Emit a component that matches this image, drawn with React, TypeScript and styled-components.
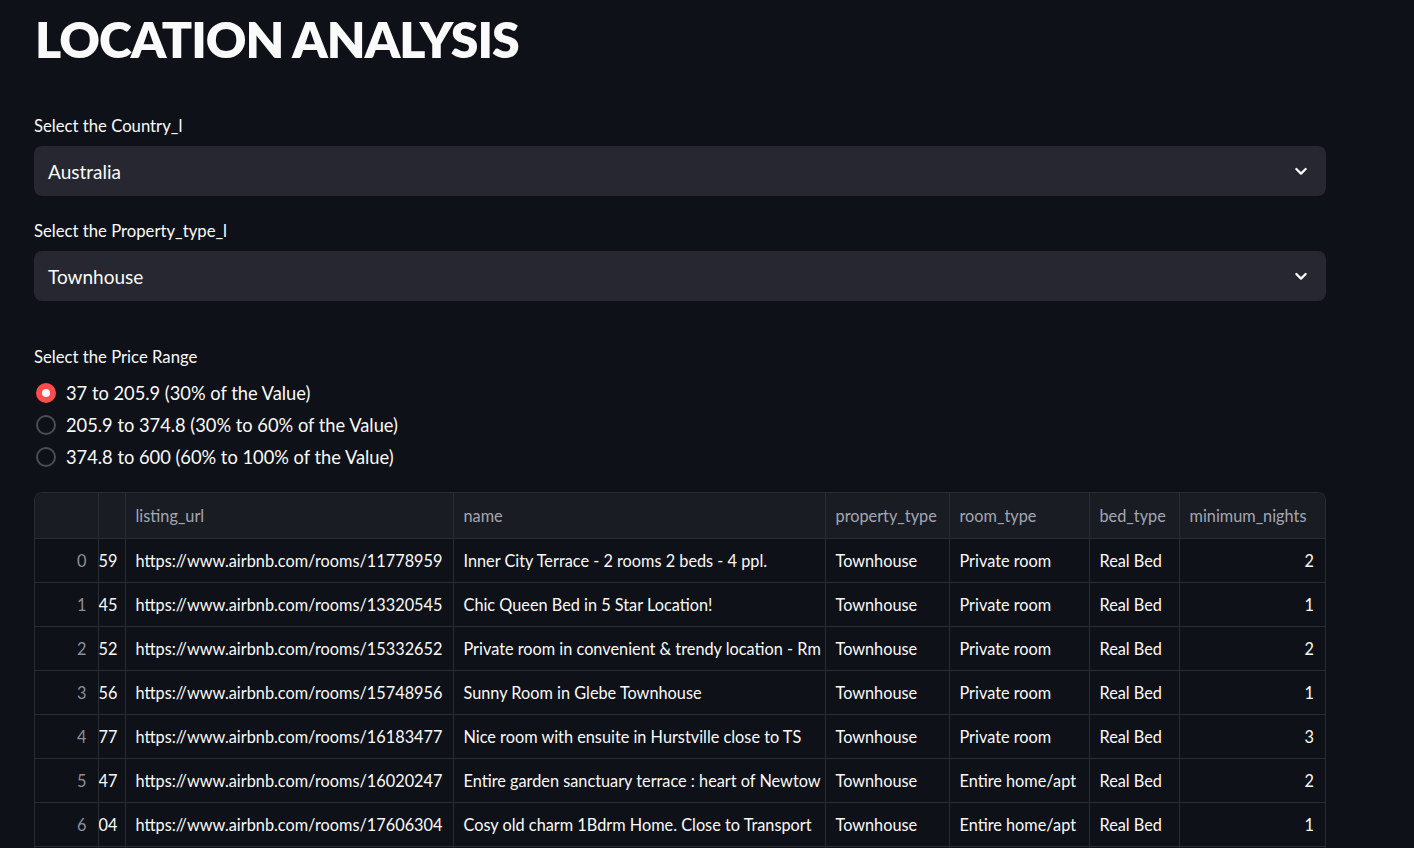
import React from "react";
import styled, { createGlobalStyle } from "styled-components";

const Global = createGlobalStyle`
  html, body { margin: 0; padding: 0; background: #0e1117; }
  body { font-family: "Lato", "Noto Sans", sans-serif; color: #fafafa; }
  * { box-sizing: border-box; }
`;

const Page = styled.div`
  width: 1414px;
  height: 848px;
  overflow: hidden;
  padding: 8px 0 0 34px;
  background: #0e1117;
`;

const Main = styled.div`
  width: 1292px;
  display: flex;
  flex-direction: column;
`;

const Title = styled.h1`
  margin: 0 0 0 1px;
  font-size: 50px;
  line-height: 62px;
  font-weight: 800;
  letter-spacing: -1px;
  color: #fafafa;
`;

const Field = styled.div<{ $top: number }>`
  margin-top: ${(p) => p.$top}px;
  display: flex;
  flex-direction: column;
  gap: 9px;
`;

const Label = styled.div`
  font-size: 16.7px;
  line-height: 22px;
  color: #fafafa;
`;

const Select = styled.div`
  height: 50px;
  border-radius: 8px;
  background: #262730;
  display: flex;
  align-items: center;
  justify-content: space-between;
  padding: 0 17px 0 14px;
  font-size: 19px;
  color: #fafafa;
`;

const RadioGroup = styled.div`
  display: flex;
  flex-direction: column;
`;

const RadioRow = styled.div`
  height: 32px;
  display: flex;
  align-items: center;
  gap: 10px;
  padding-left: 2px;
  font-size: 18.3px;
`;

const RadioDot = styled.span<{ $on: boolean }>`
  width: 20px;
  height: 20px;
  border-radius: 50%;
  flex: none;
  display: flex;
  align-items: center;
  justify-content: center;
  background: ${(p) => (p.$on ? "#ff4b4b" : "transparent")};
  border: ${(p) => (p.$on ? "none" : "2px solid #4b4d57")};
  &::after {
    content: "";
    width: 8px;
    height: 8px;
    border-radius: 50%;
    background: #fafafa;
    display: ${(p) => (p.$on ? "block" : "none")};
  }
`;

const TableWrap = styled.div`
  margin-top: 19px;
  border: 1px solid #2a2c35;
  border-bottom: none;
  border-radius: 8px 8px 0 0;
  overflow: hidden;
  width: 1292px;
`;

const Table = styled.table`
  border-collapse: collapse;
  table-layout: fixed;
  width: 1290px;
  font-size: 16.3px;
`;

const HeadCell = styled.th<{ $w: number }>`
  width: ${(p) => p.$w}px;
  height: 45px;
  background: #1a1c24;
  color: #a3a7b2;
  font-weight: 400;
  text-align: left;
  padding: 0 0 0 10px;
  border-right: 1px solid #2a2c35;
  border-bottom: 1px solid #2a2c35;
  white-space: nowrap;
  overflow: hidden;
  &:last-child { border-right: none; }
`;

const Cell = styled.td<{ $align?: "left" | "right"; $muted?: boolean; $pad?: number }>`
  height: 44px;
  padding: ${(p) => (p.$align === "right" ? "0 11px 0 0" : `0 0 0 ${p.$pad ?? 10}px`)};
  text-align: ${(p) => p.$align ?? "left"};
  color: ${(p) => (p.$muted ? "#8d909a" : "#fafafa")};
  border-right: 1px solid #2a2c35;
  border-bottom: 1px solid #2a2c35;
  white-space: nowrap;
  overflow: hidden;
  text-overflow: clip;
  &:last-child { border-right: none; }
`;

const Chevron = () => (
  <svg width="16" height="16" viewBox="0 0 24 24" fill="none" stroke="#fafafa" strokeWidth="3.4" strokeLinecap="round" strokeLinejoin="round">
    <path d="M5 9l7 7 7-7" />
  </svg>
);

const cols = [
  { key: "idx", label: "", w: 63 },
  { key: "id", label: "", w: 27 },
  { key: "listing_url", label: "listing_url", w: 328 },
  { key: "name", label: "name", w: 372 },
  { key: "property_type", label: "property_type", w: 124 },
  { key: "room_type", label: "room_type", w: 140 },
  { key: "bed_type", label: "bed_type", w: 90 },
  { key: "minimum_nights", label: "minimum_nights", w: 146 },
];

const rows = [
  ["59", "https://www.airbnb.com/rooms/11778959", "Inner City Terrace - 2 rooms 2 beds - 4 ppl.", "Townhouse", "Private room", "Real Bed", "2"],
  ["45", "https://www.airbnb.com/rooms/13320545", "Chic Queen Bed in 5 Star Location!", "Townhouse", "Private room", "Real Bed", "1"],
  ["52", "https://www.airbnb.com/rooms/15332652", "Private room in convenient & trendy location - Rm", "Townhouse", "Private room", "Real Bed", "2"],
  ["56", "https://www.airbnb.com/rooms/15748956", "Sunny Room in Glebe Townhouse", "Townhouse", "Private room", "Real Bed", "1"],
  ["77", "https://www.airbnb.com/rooms/16183477", "Nice room with ensuite in Hurstville close to TS", "Townhouse", "Private room", "Real Bed", "3"],
  ["47", "https://www.airbnb.com/rooms/16020247", "Entire garden sanctuary terrace : heart of Newtow", "Townhouse", "Entire home/apt", "Real Bed", "2"],
  ["04", "https://www.airbnb.com/rooms/17606304", "Cosy old charm 1Bdrm Home. Close to Transport", "Townhouse", "Entire home/apt", "Real Bed", "1"],
  ["11", "https://www.airbnb.com/rooms/18130211", "Bright room in Paddington terrace", "Townhouse", "Private room", "Real Bed", "2"],
];

const ranges = [
  { label: "37 to 205.9 (30% of the Value)", on: true },
  { label: "205.9 to 374.8 (30% to 60% of the Value)", on: false },
  { label: "374.8 to 600 (60% to 100% of the Value)", on: false },
];

export default function App() {
  return (
    <Page>
      <Global />
      <Main>
        <Title>LOCATION ANALYSIS</Title>
        <Field $top={45}>
          <Label>Select the Country_l</Label>
          <Select>
            <span>Australia</span>
            <Chevron />
          </Select>
        </Field>
        <Field $top={24}>
          <Label>Select the Property_type_l</Label>
          <Select>
            <span>Townhouse</span>
            <Chevron />
          </Select>
        </Field>
        <Field $top={45}>
          <Label>Select the Price Range</Label>
          <RadioGroup>
            {ranges.map((r) => (
              <RadioRow key={r.label}>
                <RadioDot $on={r.on} />
                <span>{r.label}</span>
              </RadioRow>
            ))}
          </RadioGroup>
        </Field>
        <TableWrap>
          <Table>
            <thead>
              <tr>
                {cols.map((c) => (
                  <HeadCell key={c.key} $w={c.w}>{c.label}</HeadCell>
                ))}
              </tr>
            </thead>
            <tbody>
              {rows.map((r, i) => (
                <tr key={i}>
                  <Cell $align="right" $muted>{i}</Cell>
                  <Cell $pad={0}>{r[0]}</Cell>
                  <Cell>{r[1]}</Cell>
                  <Cell>{r[2]}</Cell>
                  <Cell>{r[3]}</Cell>
                  <Cell>{r[4]}</Cell>
                  <Cell>{r[5]}</Cell>
                  <Cell $align="right">{r[6]}</Cell>
                </tr>
              ))}
            </tbody>
          </Table>
        </TableWrap>
      </Main>
    </Page>
  );
}
